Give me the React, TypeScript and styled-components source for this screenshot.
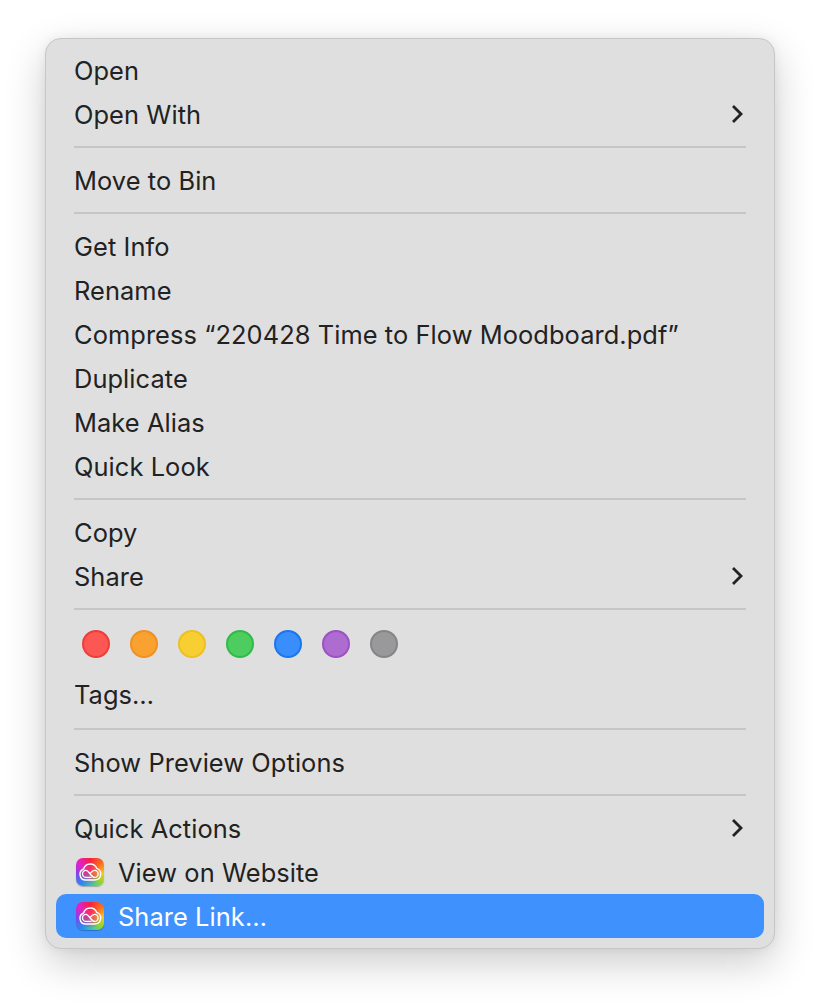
import React, { ReactElement } from 'react'
import styled, { createGlobalStyle } from 'styled-components'

const GlobalStyle = createGlobalStyle`
  html, body {
    margin: 0;
    padding: 0;
    background: #fff;
  }
`

const Chevron = (): ReactElement => (
  <ChevronIcon viewBox="0 0 14 22" width="14" height="22">
    <path d="M3 3 L11 11 L3 19" fill="none" stroke="#222" strokeWidth="2.8" />
  </ChevronIcon>
)

const CloudIcon = (): ReactElement => (
  <AppIcon>
    <svg viewBox="0 0 28 28" width="28" height="28">
      <g fill="none" stroke="#fff" strokeWidth="1.4" strokeLinecap="round">
        <path d="M9.6 22H18.6A6 6 0 0 0 20.8 10.4A7 7 0 0 0 7.6 11A5.7 5.7 0 0 0 9.6 22Z" />
        <path d="M10 19.4A3.5 3.5 0 0 1 10 12.4C13.2 12.4 15 19.4 18.6 19.4A3.5 3.5 0 0 0 18.6 12.4C17 12.4 15.8 13.4 15 14.6" />
        <path d="M10 19.4H15" />
      </g>
    </svg>
  </AppIcon>
)

const tagColors = [
  ['#fc5753', '#ee3e3a'],
  ['#f9a232', '#ef9020'],
  ['#f8cf33', '#efbf20'],
  ['#4dcd5f', '#30bb48'],
  ['#3a8efb', '#1a76ee'],
  ['#ae6bd0', '#9c52c2'],
  ['#99999b', '#858587'],
]

const App = (): ReactElement => {
  return (
    <Page>
      <GlobalStyle />
      <Menu>
        <Item>Open</Item>
        <Item>
          Open With
          <Chevron />
        </Item>
        <Separator />
        <Item>Move to Bin</Item>
        <Separator />
        <Item>Get Info</Item>
        <Item>Rename</Item>
        <Item>Compress “220428 Time to Flow Moodboard.pdf”</Item>
        <Item>Duplicate</Item>
        <Item>Make Alias</Item>
        <Item>Quick Look</Item>
        <Separator />
        <Item>Copy</Item>
        <Item>
          Share
          <Chevron />
        </Item>
        <Separator />
        <TagRow>
          {tagColors.map(([fill, edge]) => (
            <TagDot key={fill} $fill={fill} $edge={edge} />
          ))}
        </TagRow>
        <TagsItem>Tags…</TagsItem>
        <Separator />
        <Item>Show Preview Options</Item>
        <Separator />
        <Item>
          Quick Actions
          <Chevron />
        </Item>
        <Item>
          <CloudIcon />
          View on Website
        </Item>
        <Item $active>
          <CloudIcon />
          Share Link…
        </Item>
      </Menu>
    </Page>
  )
}

const Page = styled.div`
  width: 820px;
  height: 1002px;
  box-sizing: border-box;
  padding: 38px 0 0 45px;
  overflow: hidden;
  background: #fff;
  font-family: Inter, 'Liberation Sans', sans-serif;
`

const Menu = styled.div`
  width: 730px;
  height: 911px;
  box-sizing: border-box;
  padding: 9px 10px 0;
  background: #dfdfdf;
  border: 1px solid #c6c6c6;
  border-radius: 16px;
  box-shadow: 0 14px 40px rgba(0, 0, 0, 0.2), 0 0 12px rgba(0, 0, 0, 0.06);
`

const Item = styled.div<{ $active?: boolean }>`
  height: 44px;
  box-sizing: border-box;
  padding: 0 0 0 18px;
  display: flex;
  align-items: center;
  border-radius: 10px;
  font-size: 25.4px;
  letter-spacing: 0.08px;
  color: ${(props) => (props.$active ? '#fff' : '#222')};
  background: ${(props) => (props.$active ? '#3f92fd' : 'transparent')};
`

const TagsItem = styled(Item)`
  height: 46px;
  padding-bottom: 2px;
`

const Separator = styled.div`
  height: 2px;
  margin: 10px 18px;
  background: #c6c6c6;
`

const TagRow = styled.div`
  height: 52px;
  box-sizing: border-box;
  padding: 10px 0 0 26px;
  display: flex;
  gap: 20px;
`

const TagDot = styled.div<{ $fill: string; $edge: string }>`
  width: 28px;
  height: 28px;
  box-sizing: border-box;
  border-radius: 50%;
  background: ${(props) => props.$fill};
  border: 2px solid ${(props) => props.$edge};
`

const ChevronIcon = styled.svg`
  margin-left: auto;
  margin-right: 20px;
`

const AppIcon = styled.div`
  width: 28px;
  height: 28px;
  margin: 0 14px 0 2px;
  border-radius: 7px;
  flex: none;
  box-shadow: 0 1px 1px rgba(0, 0, 0, 0.25);
  background: radial-gradient(circle at 50% 52%, rgba(250, 50, 110, 0.8) 0, rgba(250, 50, 110, 0.6) 26%, rgba(250, 50, 110, 0) 60%),
    conic-gradient(
      from 0deg at 50% 50%,
      #f5203f 0deg,
      #fb6a1c 50deg,
      #f6c81e 95deg,
      #8fd62e 135deg,
      #2fc6c0 175deg,
      #2a8bef 215deg,
      #8a3fe8 265deg,
      #e51fc8 310deg,
      #f5203f 360deg
    );
`

export default App
